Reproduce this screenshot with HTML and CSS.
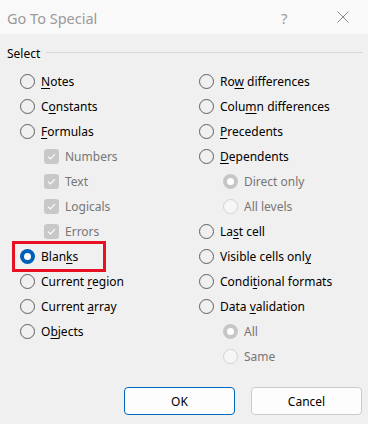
FILE: index.html
```html
<!DOCTYPE html>
<html>
<head>
<meta charset="utf-8">
<link rel="stylesheet" href="styles.css">
</head>
<body>
<div class="dialog">
  <div class="titlebar">
    <span class="title">Go To Special</span>
    <span class="help">?</span>
    <span class="close">
      <svg width="12" height="12" viewBox="0 0 12 12"><path d="M0.5 0.5 L11.5 11.5 M11.5 0.5 L0.5 11.5" stroke="#8a8a8a" stroke-width="1" fill="none"/></svg>
    </span>
  </div>
  <div class="content">
    <div class="legend"><span>Select</span><div class="rule"></div></div>
    <div class="columns">
      <div class="col col-left">
        <div class="row"><span class="radio"></span><span class="lbl"><u>N</u>otes</span></div>
        <div class="row"><span class="radio"></span><span class="lbl">C<u>o</u>nstants</span></div>
        <div class="row"><span class="radio"></span><span class="lbl"><u>F</u>ormulas</span></div>
        <div class="row sub"><span class="check"><svg width="9" height="7" viewBox="0 0 9 7"><path d="M1 3.6 L3.4 6 L8 1.2" stroke="#fff" stroke-width="1.1" fill="none"/></svg></span><span class="lbl dis">Numbers</span></div>
        <div class="row sub"><span class="check"><svg width="9" height="7" viewBox="0 0 9 7"><path d="M1 3.6 L3.4 6 L8 1.2" stroke="#fff" stroke-width="1.1" fill="none"/></svg></span><span class="lbl dis">Text</span></div>
        <div class="row sub"><span class="check"><svg width="9" height="7" viewBox="0 0 9 7"><path d="M1 3.6 L3.4 6 L8 1.2" stroke="#fff" stroke-width="1.1" fill="none"/></svg></span><span class="lbl dis">Logicals</span></div>
        <div class="row sub"><span class="check"><svg width="9" height="7" viewBox="0 0 9 7"><path d="M1 3.6 L3.4 6 L8 1.2" stroke="#fff" stroke-width="1.1" fill="none"/></svg></span><span class="lbl dis">Errors</span></div>
        <div class="row marked"><span class="radio on"></span><span class="lbl">Blan<u>k</u>s</span><span class="highlight"></span></div>
        <div class="row"><span class="radio"></span><span class="lbl">Current <u>r</u>egion</span></div>
        <div class="row"><span class="radio"></span><span class="lbl">Current <u>a</u>rray</span></div>
        <div class="row"><span class="radio"></span><span class="lbl">O<u>b</u>jects</span></div>
      </div>
      <div class="col col-right">
        <div class="row"><span class="radio"></span><span class="lbl">Ro<u>w</u> differences</span></div>
        <div class="row"><span class="radio"></span><span class="lbl">Colu<u>m</u>n differences</span></div>
        <div class="row"><span class="radio"></span><span class="lbl"><u>P</u>recedents</span></div>
        <div class="row"><span class="radio"></span><span class="lbl"><u>D</u>ependents</span></div>
        <div class="row sub"><span class="radio dis-on"></span><span class="lbl dis">Direct only</span></div>
        <div class="row sub"><span class="radio dis-off"></span><span class="lbl dis">All levels</span></div>
        <div class="row"><span class="radio"></span><span class="lbl">La<u>s</u>t cell</span></div>
        <div class="row"><span class="radio"></span><span class="lbl">Visible cells onl<u>y</u></span></div>
        <div class="row"><span class="radio"></span><span class="lbl">Condi<u>t</u>ional formats</span></div>
        <div class="row"><span class="radio"></span><span class="lbl">Data <u>v</u>alidation</span></div>
        <div class="row sub"><span class="radio dis-on"></span><span class="lbl dis">All</span></div>
        <div class="row sub"><span class="radio dis-off"></span><span class="lbl dis">Same</span></div>
      </div>
    </div>
    <div class="buttons">
      <button class="btn primary">OK</button>
      <button class="btn">Cancel</button>
    </div>
  </div>
</div>
</body>
</html>
```
FILE: styles.css
```css
html, body {
  margin: 0;
  padding: 0;
}
body {
  width: 368px;
  height: 424px;
  background: #f0f0f0;
  font-family: "Noto Sans", "Open Sans", sans-serif;
  font-size: 12px;
  color: #000;
  overflow: hidden;
}
.dialog {
  width: 368px;
  height: 424px;
  display: flex;
  flex-direction: column;
}
.titlebar {
  height: 34px;
  background: #f9f9f9;
  display: flex;
  align-items: center;
  padding-left: 7px;
  flex-shrink: 0;
}
.title {
  font-size: 14.5px;
  color: #9a9a9a;
  flex: 1;
  margin-top: 1px;
}
.help {
  font-size: 15px;
  color: #9a9a9a;
  width: 12px;
  margin-right: 44px;
  margin-top: 1px;
}
.close {
  display: flex;
  margin-right: 19px;
}
.content {
  flex: 1;
  display: flex;
  flex-direction: column;
}
.legend {
  display: flex;
  align-items: center;
  height: 20px;
  margin-top: 9px;
  padding-left: 7px;
  padding-right: 5px;
}
.legend .rule {
  flex: 1;
  height: 1px;
  background: #d9d9d9;
  margin-left: 6px;
  margin-top: -2px;
}
.columns {
  display: grid;
  grid-template-columns: 199px 1fr;
  margin-top: 6px;
}
.col-left {
  padding-left: 20px;
}
.row {
  height: 25px;
  display: flex;
  align-items: center;
  position: relative;
}
.row.sub {
  padding-left: 24px;
}
.lbl {
  margin-left: 6px;
  white-space: nowrap;
}
.lbl u {
  text-decoration-thickness: 1px;
  text-underline-offset: 2px;
}
.lbl.dis {
  color: #767676;
}
.radio {
  width: 15px;
  height: 15px;
  box-sizing: border-box;
  border: 1px solid #5f5f5f;
  border-radius: 50%;
  flex-shrink: 0;
  position: relative;
}
.radio.on {
  border: none;
  background: #005fb8;
}
.radio.on::after,
.radio.dis-on::after {
  content: "";
  position: absolute;
  left: 4px;
  top: 4px;
  width: 7px;
  height: 7px;
  border-radius: 50%;
  background: #fff;
}
.radio.dis-on {
  border: none;
  background: #c6c6c6;
}
.radio.dis-off {
  border-color: #d2d2d2;
  background: #f6f6f6;
}
.check {
  width: 15px;
  height: 15px;
  border-radius: 3px;
  background: #c8c8c8;
  display: flex;
  align-items: center;
  justify-content: center;
  flex-shrink: 0;
}
.highlight {
  position: absolute;
  left: -8px;
  top: -3px;
  width: 94px;
  height: 31px;
  box-sizing: border-box;
  border: 3px solid #e81123;
  pointer-events: none;
}
.buttons {
  display: flex;
  justify-content: flex-end;
  gap: 16px;
  padding-right: 6px;
  margin-top: 18px;
}
.btn {
  width: 111px;
  height: 28px;
  box-sizing: border-box;
  border: 1px solid #cccccc;
  border-radius: 4px;
  background: #fdfdfd;
  font-family: "Noto Sans", "Open Sans", sans-serif;
  font-size: 12px;
  color: #000;
  padding: 0;
}
.btn.primary {
  border-color: #0067c0;
  background: #fdfdfd;
}
```
